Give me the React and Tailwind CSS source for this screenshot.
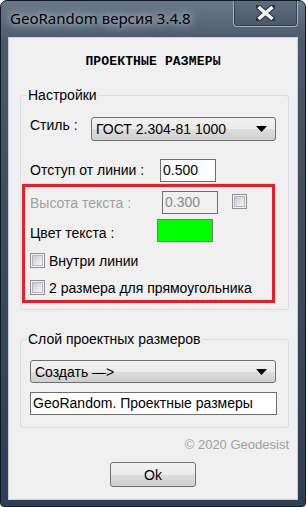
import React from "react";

function Checkbox() {
  return (
    <div className="w-[15px] h-[15px] shrink-0 border border-[#8e8f8f] bg-[#f4f4f4] p-[1px]">
      <div className="w-full h-full border border-[#b3b7bd] bg-gradient-to-br from-[#c9ccd1] to-[#f7f7f7]" />
    </div>
  );
}

function Arrow() {
  return (
    <svg width="11" height="6" viewBox="0 0 11 6" className="shrink-0">
      <path d="M0 0 H11 L5.5 6 Z" fill="#000" />
    </svg>
  );
}

function Combo({ text, w, h }) {
  return (
    <div
      className={`${w} ${h} flex items-center justify-between pl-[4px] pr-[8px] rounded-[3px] border border-[#707070] bg-[linear-gradient(#f2f2f2_0%,#ebebeb_50%,#dddddd_50%,#cfcfcf_100%)]`}
    >
      <span>{text}</span>
      <Arrow />
    </div>
  );
}

export default function App() {
  return (
    <div
      className="w-[306px] h-[507px] flex flex-col overflow-hidden rounded-t-[7px] rounded-b-[4px] border border-[#101924] bg-[linear-gradient(#6a7888_0%,#4b596a_8%,#3e4d5f_40%,#2f3f53_100%)]"
      style={{ fontFamily: '"Liberation Sans", Arial, sans-serif' }}
    >
      {/* Title bar */}
      <div className="h-[36px] shrink-0 flex items-start justify-between">
        <div
          className="ml-[9px] mt-[7px] text-[15px] leading-[20px] text-black [text-shadow:0_0_6px_rgba(200,210,220,0.9),0_0_12px_rgba(200,210,220,0.8),0_0_18px_rgba(180,190,200,0.7)]"
          style={{ fontFamily: '"Noto Sans", "Open Sans", sans-serif' }}
        >
          GeoRandom версия 3.4.8
        </div>
        <div className="mr-[7px] -mt-[1px] w-[65px] h-[27px] rounded-b-[4px] border border-[#aab3bd] border-t-0 bg-[linear-gradient(#5f6d7d,#4a5869)] shadow-[inset_0_0_0_1px_rgba(30,40,55,0.6)] flex items-center justify-center">
          <svg width="19" height="16" viewBox="0 0 19 16">
            <path
              d="M2 1.5 L17 14.5 M17 1.5 L2 14.5"
              stroke="#2a3340"
              strokeWidth="5.5"
              strokeLinecap="square"
            />
            <path
              d="M2.5 2 L16.5 14 M16.5 2 L2.5 14"
              stroke="#f4f4f4"
              strokeWidth="3.6"
              strokeLinecap="butt"
            />
          </svg>
        </div>
      </div>

      {/* Client area */}
      <div className="mx-[7px] h-[463px] shrink-0 border border-[#c9d1da] bg-[#f0f0f0] flex flex-col text-[14px] leading-[16px] text-black">
        <div
          className="mt-[16px] text-center font-bold text-[13px] leading-[16px] tracking-[0.15px]"
          style={{ fontFamily: '"Liberation Mono", "DejaVu Sans Mono", monospace' }}
        >
          ПРОЕКТНЫЕ РАЗМЕРЫ
        </div>

        {/* Group 1 */}
        <div className="relative ml-[11px] mt-[25px] w-[269px] h-[215px] border border-[#d5dfe5] rounded-[3px] flex flex-col">
          <div className="absolute -top-[9px] left-[6px] px-[1px] bg-[#f0f0f0] leading-[16px]">
            Настройки
          </div>

          <div className="mt-[21px] ml-[9px] flex items-start">
            <div className="w-[61px] leading-[16px]">Стиль :</div>
            <Combo text="ГОСТ 2.304-81 1000" w="w-[185px]" h="h-[24px]" />
          </div>

          <div className="mt-[18px] ml-[9px] flex items-start">
            <div className="w-[130px] mt-[3px]">Отступ от линии :</div>
            <div className="w-[56px] h-[23px] border border-[#6e6e6e] bg-white pl-[2px] leading-[21px]">
              0.500
            </div>
          </div>

          <div className="mt-[2px] ml-[1px] w-[253px] h-[119px] border-[3px] border-[#ed1c24] flex flex-col">
            <div className="mt-[4px] ml-[5px] flex items-start">
              <div className="w-[132px] mt-[4px] text-[#a0a0a0]">Высота текста :</div>
              <div className="w-[56px] h-[23px] border border-[#6e6e6e] bg-[#f0f0f0] pl-[2px] leading-[21px] text-[#8a8a8a]">
                0.300
              </div>
              <div className="ml-[14px] mt-[3px]">
                <Checkbox />
              </div>
            </div>

            <div className="mt-[5px] ml-[5px] flex items-start">
              <div className="w-[127px] mt-[6px]">Цвет текста :</div>
              <div className="w-[56px] h-[23px] border border-[#7a7a7a] bg-[#00ff00]" />
            </div>

            <div className="mt-[11px] ml-[5px] h-[15px] flex items-center gap-[4px]">
              <Checkbox />
              <span>Внутри линии</span>
            </div>

            <div className="mt-[12px] ml-[5px] h-[15px] flex items-center gap-[4px]">
              <Checkbox />
              <span>2 размера для прямоугольника</span>
            </div>
          </div>
        </div>

        {/* Group 2 */}
        <div className="relative ml-[11px] mt-[29px] w-[269px] h-[89px] border border-[#d5dfe5] rounded-[3px] flex flex-col">
          <div className="absolute -top-[9px] left-[6px] px-[1px] bg-[#f0f0f0] leading-[16px]">
            Слой проектных размеров
          </div>
          <div className="mt-[20px] ml-[9px]">
            <Combo text="Создать —>" w="w-[246px]" h="h-[23px]" />
          </div>
          <div className="mt-[9px] ml-[9px] w-[247px] h-[23px] border border-[#6e6e6e] bg-white pl-[2px] leading-[21px]">
            GeoRandom. Проектные размеры
          </div>
        </div>

        <div className="mt-[9px] mr-[8px] text-right text-[13px] text-[#a0a0a0]">© 2020 Geodesist</div>

        <div className="mt-[9px] mx-auto w-[86px] h-[25px] rounded-[3px] border border-[#707070] bg-[linear-gradient(#f2f2f2_0%,#ebebeb_50%,#dddddd_50%,#cfcfcf_100%)] flex items-center justify-center">
          Ok
        </div>
      </div>
    </div>
  );
}
